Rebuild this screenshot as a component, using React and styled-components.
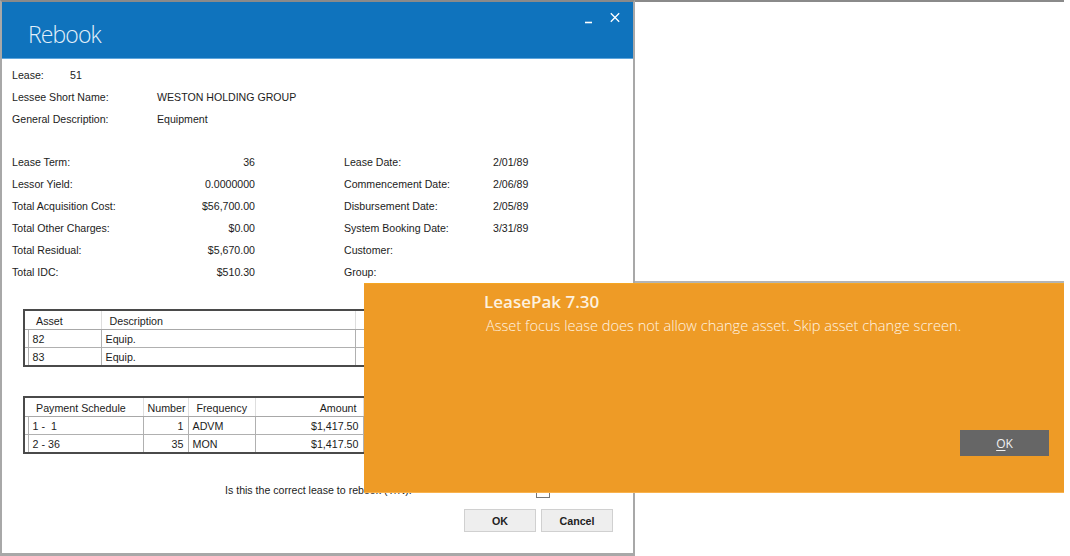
import React from "react";
import styled, { createGlobalStyle } from "styled-components";

const Global = createGlobalStyle`
  html, body { margin: 0; padding: 0; background: #fff; }
  body { width: 1070px; height: 556px; overflow: hidden; font-family: "Liberation Sans", Arial, sans-serif; }
`;

const Desktop = styled.div`
  position: relative;
  width: 1070px;
  height: 556px;
  background: #fff;
  overflow: hidden;
  color: #1c1c1c;
  font-size: 10.6px;
`;

const BackWindow = styled.div`
  position: absolute;
  left: 634px;
  top: 0;
  width: 430px;
  height: 283px;
  box-sizing: border-box;
  border-top: 2px solid #8a8a8a;
  border-bottom: 2px solid #b4b4b4;
`;

const Window = styled.div`
  position: absolute;
  left: 0;
  top: 0;
  width: 635px;
  height: 556px;
  box-sizing: border-box;
  background: #fff;
  border-style: solid;
  border-color: #a8a8a8;
  border-width: 2px 2px 3px 2px;
  border-top-color: #8a8a8a;
  display: flex;
  flex-direction: column;
`;

const Header = styled.header`
  height: 57px;
  flex: none;
  box-sizing: border-box;
  background: #0f73bd;
  border-bottom: 1px solid #5fa6dc;
  display: flex;
  justify-content: space-between;
  align-items: flex-start;
  padding: 0 13px 0 26px;
`;

const Title = styled.h1`
  margin: 19px 0 0;
  font: 300 23px/26px "Open Sans", sans-serif;
  letter-spacing: -0.9px;
  color: #e3f0fa;
`;

const WindowButtons = styled.div`
  display: flex;
  align-items: flex-start;
  gap: 17px;
  margin-top: 9px;
  svg { display: block; }
`;

const Body = styled.div`
  flex: 1;
  padding: 5px 20px 0 10px;
  display: flex;
  flex-direction: column;
  min-height: 0;
`;

const InfoRow = styled.div`
  display: grid;
  grid-template-columns: ${(p) => p.$label}px 1fr;
  height: 22px;
  align-items: center;
  white-space: nowrap;
`;

const Summary = styled.div`
  margin-top: 21px;
  display: grid;
  grid-template-columns: 243px 149px 1fr;
  grid-auto-rows: 22px;
  column-gap: 0;
  align-items: center;
`;

const LeftPair = styled.div`
  display: flex;
  justify-content: space-between;
  white-space: nowrap;
`;

const RightLabel = styled.div`
  padding-left: 89px;
  margin-right: -89px;
  white-space: nowrap;
`;

const RightValue = styled.div`
  padding-left: 89px;
  white-space: nowrap;
`;

const Grid = styled.table`
  border-collapse: collapse;
  table-layout: fixed;
  width: 590px;
  margin-left: 11px;
  margin-top: ${(p) => p.$top}px;
  border: 2px solid #4a4a4a;
  font-size: 10.7px;
`;

const Col = styled.col`
  width: ${(p) => p.$w}px;
`;

const HeadCell = styled.th`
  font-weight: 400;
  height: 16px;
  padding: 2px ${(p) => (p.$align === "right" ? 6 : 2)}px 0 ${(p) => p.$pad ?? 8}px;
  text-align: ${(p) => p.$align || "left"};
  border-right: 1px solid #dedede;
  border-bottom: 1px solid #a8a8a8;
  white-space: nowrap;
  overflow: hidden;
`;

const Cell = styled.td`
  height: 17px;
  padding: 0 4px;
  text-align: ${(p) => p.$align || "left"};
  border-right: 1px solid #b0b0b0;
  border-bottom: 1px solid #b0b0b0;
  white-space: pre;
  overflow: hidden;
`;

const GutterCell = styled.td`
  padding: 0;
  border-right: 1px solid #b0b0b0;
  border-bottom: 1px solid #b0b0b0;
`;

const GutterHead = styled.th`
  padding: 0;
  border-bottom: 1px solid #a8a8a8;
`;

const Question = styled.div`
  margin-top: 27px;
  margin-left: 213px;
  height: 18px;
  display: flex;
  align-items: center;
  white-space: nowrap;
`;

const CheckBox = styled.span`
  width: 14px;
  height: 14px;
  box-sizing: border-box;
  border: 1px solid #777;
  background: #fff;
  margin: 2px 0 0 124px;
  flex: none;
`;

const Actions = styled.div`
  margin-top: 10px;
  display: flex;
  justify-content: flex-end;
  gap: 5px;
`;

const ActionButton = styled.button`
  width: 72px;
  height: 23px;
  box-sizing: border-box;
  background: #eeeeee;
  border: 1px solid #d0d0d0;
  font: 700 10.7px "Liberation Sans", Arial, sans-serif;
  color: #222;
  padding: 0;
`;

const Notice = styled.div`
  position: absolute;
  left: 364px;
  top: 283px;
  width: 700px;
  height: 210px;
  box-sizing: border-box;
  background: #ee9b26;
  border-top: 1px solid #f5a623;
  border-bottom: 1px solid #f9b24d;
  display: flex;
  flex-direction: column;
  padding: 7px 15px 0 120px;
  font-family: "Open Sans", sans-serif;
`;

const NoticeTitle = styled.div`
  font-size: 17px;
  line-height: 22px;
  font-weight: 600;
  color: #fdf1df;
  white-space: nowrap;
`;

const NoticeText = styled.div`
  margin: 2px 0 0 2px;
  font-size: 14.6px;
  line-height: 20px;
  font-weight: 300;
  color: #fff4e4;
  white-space: nowrap;
`;

const NoticeActions = styled.div`
  margin-top: auto;
  margin-bottom: 36px;
  display: flex;
  justify-content: flex-end;
`;

const NoticeButton = styled.button`
  width: 89px;
  height: 26px;
  background: #666666;
  border: 0;
  color: #f2f2f2;
  font: 400 12px "Open Sans", sans-serif;
  padding: 0;
  u { text-underline-offset: 2px; }
`;

const summary = [
  ["Lease Term:", "36", "Lease Date:", "2/01/89"],
  ["Lessor Yield:", "0.0000000", "Commencement Date:", "2/06/89"],
  ["Total Acquisition Cost:", "$56,700.00", "Disbursement Date:", "2/05/89"],
  ["Total Other Charges:", "$0.00", "System Booking Date:", "3/31/89"],
  ["Total Residual:", "$5,670.00", "Customer:", ""],
  ["Total IDC:", "$510.30", "Group:", ""],
];

const assets = [["82", "Equip."], ["83", "Equip."]];
const payments = [
  ["1 -  1", "1", "ADVM", "$1,417.50"],
  ["2 - 36", "35", "MON", "$1,417.50"],
];

export default function App() {
  return (
    <Desktop>
      <Global />
      <BackWindow />
      <Window>
        <Header>
          <Title>Rebook</Title>
          <WindowButtons>
            <svg width="9" height="14" viewBox="0 0 9 14"><path d="M1 11.5h7" stroke="#fff" strokeWidth="1.6" /></svg>
            <svg width="10" height="14" viewBox="0 0 10 14"><path d="M.8 2.2l8.4 8.6M9.2 2.2L.8 10.8" stroke="#fff" strokeWidth="1.3" fill="none" /></svg>
          </WindowButtons>
        </Header>
        <Body>
          <InfoRow $label={58}><span>Lease:</span><span>51</span></InfoRow>
          <InfoRow $label={145}><span>Lessee Short Name:</span><span>WESTON HOLDING GROUP</span></InfoRow>
          <InfoRow $label={145}><span>General Description:</span><span>Equipment</span></InfoRow>
          <Summary>
            {summary.map((r) => (
              <React.Fragment key={r[0]}>
                <LeftPair><span>{r[0]}</span><span>{r[1]}</span></LeftPair>
                <RightLabel>{r[2]}</RightLabel>
                <RightValue>{r[3]}</RightValue>
              </React.Fragment>
            ))}
          </Summary>
          <Grid $top={26}>
            <colgroup><Col $w={4} /><Col $w={73} /><Col $w={254} /><Col $w={257} /></colgroup>
            <thead>
              <tr><GutterHead /><HeadCell>Asset</HeadCell><HeadCell>Description</HeadCell><HeadCell /></tr>
            </thead>
            <tbody>
              {assets.map((r) => (
                <tr key={r[0]}><GutterCell /><Cell>{r[0]}</Cell><Cell>{r[1]}</Cell><Cell /></tr>
              ))}
            </tbody>
          </Grid>
          <Grid $top={29}>
            <colgroup><Col $w={4} /><Col $w={115} /><Col $w={45} /><Col $w={67} /><Col $w={108} /><Col $w={249} /></colgroup>
            <thead>
              <tr>
                <GutterHead />
                <HeadCell>Payment Schedule</HeadCell>
                <HeadCell $pad={4}>Number</HeadCell>
                <HeadCell>Frequency</HeadCell>
                <HeadCell $align="right">Amount</HeadCell>
                <HeadCell />
              </tr>
            </thead>
            <tbody>
              {payments.map((r) => (
                <tr key={r[0]}>
                  <GutterCell />
                  <Cell>{r[0]}</Cell>
                  <Cell $align="right">{r[1]}</Cell>
                  <Cell>{r[2]}</Cell>
                  <Cell $align="right">{r[3]}</Cell>
                  <Cell />
                </tr>
              ))}
            </tbody>
          </Grid>
          <Question>
            <span>Is this the correct lease to rebook (Y/N):</span>
            <CheckBox />
          </Question>
          <Actions>
            <ActionButton>OK</ActionButton>
            <ActionButton>Cancel</ActionButton>
          </Actions>
        </Body>
      </Window>
      <Notice>
        <NoticeTitle>LeasePak 7.30</NoticeTitle>
        <NoticeText>Asset focus lease does not allow change asset. Skip asset change screen.</NoticeText>
        <NoticeActions>
          <NoticeButton><u>O</u>K</NoticeButton>
        </NoticeActions>
      </Notice>
    </Desktop>
  );
}
